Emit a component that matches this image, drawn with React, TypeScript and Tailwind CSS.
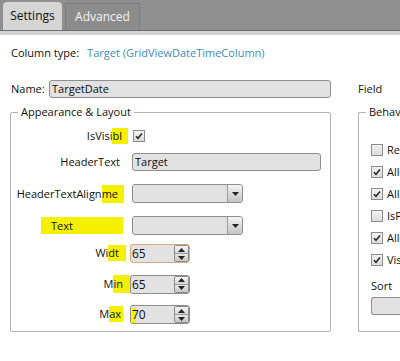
import React from "react";

const font = { fontFamily: '"Open Sans", "Noto Sans", sans-serif' };

function Check({ checked }: { checked?: boolean }) {
  return (
    <span className="flex h-[12px] w-[12px] shrink-0 items-center justify-center border border-[#8c8c8c] bg-gradient-to-b from-[#f2f2f2] to-[#dcdcdc]">
      {checked && (
        <svg width="8" height="8" viewBox="0 0 8 8">
          <path d="M1 4.2 L3 6.3 L7 1.5" fill="none" stroke="#2b2b2b" strokeWidth="1.6" />
        </svg>
      )}
    </span>
  );
}

function Arrow({ up }: { up?: boolean }) {
  return (
    <svg width="7" height="4" viewBox="0 0 7 4">
      <path d={up ? "M0 4 L3.5 0 L7 4 Z" : "M0 0 L7 0 L3.5 4 Z"} fill="#222" />
    </svg>
  );
}

function Combo() {
  return (
    <div className="flex h-[19px] w-[111px] overflow-hidden rounded-[3px] border border-[#8e8e8e] bg-[#e2e2e2]">
      <div className="flex-1" />
      <div className="flex w-[15px] items-center justify-center border-l border-[#9a9a9a] bg-gradient-to-b from-[#f4f4f4] to-[#c4c4c4]">
        <Arrow />
      </div>
    </div>
  );
}

function Spin({ value, focus, mark }: { value: string; focus?: boolean; mark?: boolean }) {
  return (
    <div
      className={
        "relative flex h-[19px] w-[60px] overflow-hidden rounded-[3px] border bg-[#e2e2e2] " +
        (focus ? "border-[#e0a878]" : "border-[#8e8e8e]")
      }
    >
      {mark && <span className="absolute left-[1px] top-[2px] h-[15px] w-[4px] bg-[#f4f000]" />}
      <span className="relative flex-1 pl-[1px] text-[12px] leading-[17px]">{value}</span>
      <div className="flex w-[15px] flex-col overflow-hidden rounded-[2px] border border-[#8a8a8a]">
        <div className="flex flex-1 items-center justify-center border-b border-[#9a9a9a] bg-gradient-to-b from-[#f6f6f6] to-[#d6d6d6]">
          <Arrow up />
        </div>
        <div className="flex flex-1 items-center justify-center bg-gradient-to-b from-[#e8e8e8] to-[#c6c6c6]">
          <Arrow />
        </div>
      </div>
    </div>
  );
}

const hl = "bg-[#f4f000]";

const behavior: [string, boolean][] = [
  ["ReadOnly", false],
  ["AllowSort", true],
  ["AllowFilter", true],
  ["IsPinned", false],
  ["AllowResize", true],
  ["VisibleInChooser", true],
];

export default function App() {
  return (
    <div className="h-[361px] w-[400px] overflow-hidden whitespace-nowrap bg-white text-[11px] text-[#0f0f0f]" style={font}>
      {/* tabs */}
      <div className="flex h-[31px] items-end gap-[3px] border-b border-[#6f6f6f] bg-[#8f8f8f] pl-[3px]">
        <div className="flex h-[28px] w-[59px] items-center justify-center rounded-t-[4px] bg-[#d5d5d5] text-[12px] text-[#111]">
          Settings
        </div>
        <div className="flex h-[27px] w-[75px] items-center justify-center border border-b-0 border-[#7d7d7d] bg-[#8c8c8c] text-[12px] text-[#f4f4f4]">
          Advanced
        </div>
      </div>
      <div className="h-[4px] bg-[#d2d2d2]" />

      <div className="pl-[11px]">
        <div className="mt-[10px] flex h-[16px] items-center leading-[16px]">
          <span>Column type:</span>
          <span className="ml-[8px] text-[#3a8dc2]">Target (GridViewDateTimeColumn)</span>
        </div>

        <div className="mt-[19px] flex">
          {/* left column */}
          <div className="w-[320px] shrink-0">
            <div className="flex h-[18px] items-center">
              <span className="w-[38px]">Name:</span>
              <div className="flex h-[18px] w-[282px] items-center rounded-[3px] border border-[#8e8e8e] bg-[#e2e2e2] pl-[2px]">
                TargetDate
              </div>
            </div>

            <fieldset className="-ml-[1px] mt-[6px] h-[228px] rounded-[2px] border border-[#b2b2b2]">
              <legend className="ml-[7px] px-[3px] leading-[16px]">Appearance &amp; Layout</legend>

              <div className="flex h-[32px] items-center">
                <div className="w-[111px] text-right">
                  IsVisi<span className={"inline-block pr-[6px] -mr-[6px] leading-[16px] " + hl}>bl</span>
                </div>
                <div className="ml-[11px]">
                  <Check checked />
                </div>
              </div>

              <div className="mt-[1px] flex h-[18px] items-center">
                <div className="w-[109px] text-right">HeaderText</div>
                <div className="ml-[12px] flex h-[18px] w-[189px] items-center rounded-[3px] border border-[#8e8e8e] bg-[#e2e2e2] pl-[2px]">
                  Target
                </div>
              </div>

              <div className="mt-[13px] flex h-[19px] items-center">
                <div className="w-[107px] text-right">
                  HeaderTextAlign
                  <span className={"inline-block pr-[6px] -mr-[6px] leading-[18px] " + hl}>me</span>
                </div>
                <div className="ml-[14px]">
                  <Combo />
                </div>
              </div>

              <div className="mt-[13px] flex h-[19px] items-center">
                <div className={"ml-[30px] h-[17px] w-[82px] pl-[10px] leading-[17px] " + hl}>Text</div>
                <div className="ml-[9px]">
                  <Combo />
                </div>
              </div>

              <div className="mt-[9px] flex h-[19px] items-center">
                <div className="w-[108px] text-right">
                  Wi<span className={"inline-block pr-[7px] -mr-[7px] leading-[16px] " + hl}>dt</span>
                </div>
                <div className="ml-[11px]">
                  <Spin value="65" focus />
                </div>
              </div>

              <div className="mt-[11px] flex h-[20px] items-center">
                <div className="w-[112px] text-right">
                  M<span className={"inline-block pr-[7px] -mr-[7px] leading-[18px] " + hl}>in</span>
                </div>
                <div className="ml-[7px]">
                  <Spin value="65" />
                </div>
              </div>

              <div className="mt-[11px] flex h-[19px] items-center">
                <div className="w-[110px] text-right">
                  M<span className={"inline-block pr-[2px] -mr-[2px] leading-[16px] " + hl}>ax</span>
                </div>
                <div className="ml-[9px]">
                  <Spin value="70" mark />
                </div>
              </div>
            </fieldset>
          </div>

          {/* right column */}
          <div className="ml-[27px] w-[80px] shrink-0">
            <div className="flex h-[18px] items-center">Field</div>
            <fieldset className="mt-[6px] h-[228px] w-[60px] overflow-hidden rounded-[2px] border border-r-0 border-[#b2b2b2]">
              <legend className="ml-[7px] px-[3px] leading-[16px]">Behavior</legend>
              <div className="mt-[24px] flex flex-col gap-[10px] pl-[12px]">
                {behavior.map(([t, c]) => (
                  <div key={t} className="flex h-[12px] items-center gap-[4px]">
                    <Check checked={c} />
                    <span>{t}</span>
                  </div>
                ))}
              </div>
              <div className="mt-[12px] pl-[12px] leading-[16px]">Sort</div>
              <div className="ml-[12px] mt-[3px] h-[18px] w-[40px] rounded-l-[3px] border border-r-0 border-[#8e8e8e] bg-[#e2e2e2]" />
            </fieldset>
          </div>
        </div>
      </div>
    </div>
  );
}
